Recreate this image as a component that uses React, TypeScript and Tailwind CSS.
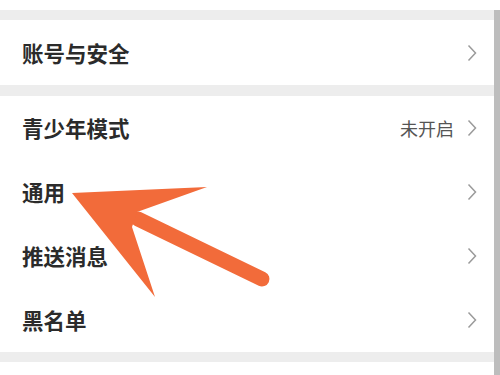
const rows = [
  { label: '青少年模式', value: '未开启' },
  { label: '通用' },
  { label: '推送消息' },
  { label: '黑名单' },
];

function Chevron() {
  return (
    <svg width="10" height="18" viewBox="0 0 10 18" className="shrink-0">
      <path d="M1.5 1.5 L8.5 9 L1.5 16.5" fill="none" stroke="#9a9a9a" strokeWidth="1.5" />
    </svg>
  );
}

function Row({ label, value }: { label: string; value?: string }) {
  return (
    <div className="flex items-center h-[64px] pl-[22px] pr-[17px] bg-white">
      <span className="flex-1 text-[21.5px] font-bold text-[#2b2b2b] leading-none">{label}</span>
      {value && <span className="text-[18px] text-[#555] mr-[13px] leading-none">{value}</span>}
      <Chevron />
    </div>
  );
}

export default function App() {
  return (
    <div
      className="relative flex w-[500px] h-[375px] overflow-hidden bg-white"
      style={{ fontFamily: '"Noto Sans CJK SC", "Noto Sans", sans-serif' }}
    >
      <div className="flex-1 flex flex-col">
        <div className="h-[10px] bg-white" />
        <div className="h-[10px] bg-[#ededed]" />
        <div className="h-[65px] flex flex-col justify-center">
          <Row label="账号与安全" />
        </div>
        <div className="h-[11px] bg-[#ededed]" />
        <div className="flex flex-col">
          {rows.map(r => (
            <Row key={r.label} label={r.label} value={r.value} />
          ))}
        </div>
        <div className="h-[10px] bg-[#ededed]" />
        <div className="flex-1 bg-white" />
      </div>
      <div className="w-[6px] flex flex-col">
        <div className="h-[10px] bg-white" />
        <div className="flex-1 bg-[#bdbdbd]" />
      </div>

      {/* annotation arrow */}
      <svg className="absolute left-0 top-0 pointer-events-none" width="500" height="375">
        <line x1="138" y1="219" x2="262" y2="279" stroke="#f26b3a" strokeWidth="15" strokeLinecap="round" />
        <polygon points="72,193 207,187 137,212 132,227 155,297" fill="#f26b3a" />
      </svg>
    </div>
  );
}
